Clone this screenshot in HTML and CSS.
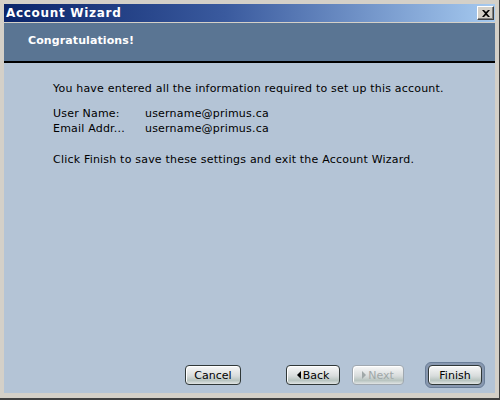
FILE: index.html
```html
<!DOCTYPE html>
<html lang="en">

<head>
    <meta charset="UTF-8">
    <title>Account Wizard</title>
    <link rel="stylesheet" href="styles.css">
</head>

<body>
    <div class="window">
        <div class="titlebar">
            <span class="title">Account Wizard</span>
            <span class="close-btn">
                <svg width="8" height="7" viewBox="0 0 8 7">
                    <path d="M0 0h2l2 2 2-2h2L5 3.5 8 7H6L4 5 2 7H0l3-3.5z" fill="#000"/>
                </svg>
            </span>
        </div>
        <div class="header">Congratulations!</div>
        <div class="content">
            <p class="intro">You have entered all the information required to set up this account.</p>
            <div class="summary">
                <div class="row"><span class="label">User Name:</span><span>username@primus.ca</span></div>
                <div class="row"><span class="label">Email Addr...</span><span>username@primus.ca</span></div>
            </div>
            <p class="outro">Click Finish to save these settings and exit the Account Wizard.</p>

            <div class="buttons">
                <button class="btn cancel">Cancel</button>
                <div class="nav">
                    <button class="btn"><span class="arrow left"></span>Back</button>
                    <button class="btn next" disabled><span class="arrow right"></span>Next</button>
                </div>
                <span class="focus-ring"><button class="btn">Finish</button></span>
            </div>
        </div>
    </div>
</body>

</html>
```

FILE: styles.css
```css
* {
    box-sizing: border-box;
    margin: 0;
    padding: 0;
}
body {
    font-family: "DejaVu Sans", Verdana, sans-serif;
    font-size: 11px;
    letter-spacing: 0.2px;
    color: #000;
}
.window {
    width: 500px;
    height: 400px;
    background: #d4d0c8;
    padding: 4px 4px 5px 4px;
    border-right: 1px solid #404040;
    border-bottom: 2px solid #404040;
    display: flex;
    flex-direction: column;
}
.titlebar {
    height: 18px;
    background: linear-gradient(to right, #0a246a, #3a5a9e 45%, #a6caf0);
    display: flex;
    align-items: center;
    justify-content: space-between;
    padding: 0 1px 0 2px;
}
.title {
    color: #fff;
    font-weight: bold;
    font-size: 12px;
    letter-spacing: 0.7px;
}
.close-btn {
    width: 17px;
    height: 14px;
    background: #d4d0c8;
    border: 1px solid;
    border-color: #fff #404040 #404040 #fff;
    box-shadow: inset -1px -1px #808080;
    display: flex;
    align-items: center;
    justify-content: center;
}
.header {
    margin-top: 1px;
    height: 40px;
    background: #5a7593;
    border-bottom: 2px solid #000;
    color: #fff;
    font-weight: bold;
    font-size: 11px;
    letter-spacing: 0.1px;
    padding: 11px 0 0 24px;
}
.content {
    flex: 1;
    background: #b4c4d6;
    padding: 18px 0 5px 49px;
    display: flex;
    flex-direction: column;
    line-height: 15px;
}
.summary {
    margin-top: 10px;
}
.row {
    display: flex;
}
.label {
    width: 92px;
}
.outro {
    margin-top: 16px;
}
.buttons {
    margin-top: auto;
    display: flex;
    align-items: center;
    padding-left: 132px;
    letter-spacing: 0;
}
.btn {
    width: 56px;
    height: 20px;
    font-family: inherit;
    font-size: 11px;
    color: #000;
    border: 1px solid #303838;
    border-radius: 4px;
    background: linear-gradient(to bottom, #f8f8f8, #d8dcdc 55%, #b8c4c0 80%, #e0e4e4);
    box-shadow: inset 1px 1px #fff;
    display: flex;
    align-items: center;
    justify-content: center;
}
.btn:disabled {
    color: #a0a8a8;
    border-color: #a0a8b0;
}
.nav {
    margin-left: 45px;
    display: flex;
    gap: 12px;
}
.nav .btn {
    width: 54px;
}
.nav .btn.next {
    width: 52px;
}
.arrow {
    width: 0;
    height: 0;
    border-top: 4px solid transparent;
    border-bottom: 4px solid transparent;
    margin-right: 2px;
}
.arrow.left {
    border-right: 4px solid #000;
}
.arrow.right {
    border-left: 4px solid #a0a8a8;
}
.focus-ring {
    margin-left: 21px;
    padding: 2px;
    border: 1px solid #6a7e98;
    background: #8898b0;
    border-radius: 6px;
    display: flex;
}
.focus-ring .btn {
    width: 54px;
}
```
